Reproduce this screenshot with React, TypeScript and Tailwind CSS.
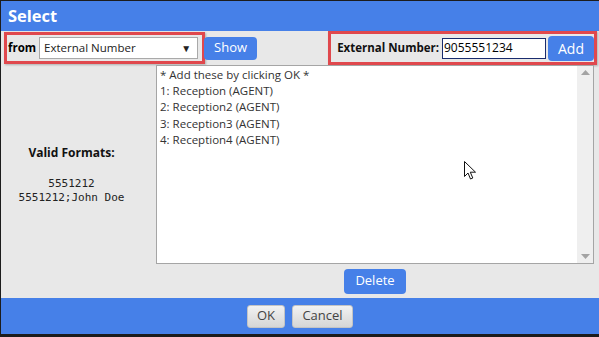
import React from "react";

const blue = "bg-[#4680e8]";

export default function App() {
  const items = [
    "* Add these by clicking OK *",
    "1: Reception (AGENT)",
    "2: Reception2 (AGENT)",
    "3: Reception3 (AGENT)",
    "4: Reception4 (AGENT)",
  ];

  return (
    <div
      className="w-[599px] h-[337px] bg-[#1c1c1c] pl-px pt-px pb-[3px] overflow-hidden"
      style={{ fontFamily: '"Open Sans", "Noto Sans", sans-serif' }}
    >
      <div className="h-full flex flex-col bg-[#e8e8e8]">
        {/* Title */}
        <div className={`h-[30px] ${blue} flex items-center px-[7px]`}>
          <span className="text-white font-bold text-[16.5px] leading-none">Select</span>
        </div>

        {/* Toolbar */}
        <div className="h-[34px] flex items-center justify-between pr-[2px]">
          <div className="flex items-center">
            <div className="ml-[3px] h-[32px] border-[3px] border-[#e0484d] flex items-center pl-[1px] pr-[4px] gap-[3px] shadow-[1px_1px_2px_rgba(0,0,0,0.25)]">
              <span className="text-[11.5px] font-bold text-black">from</span>
              <div className="w-[159px] h-[22px] bg-white border border-[#a9a9a9] flex items-center justify-between px-[4px] text-[11.5px] text-[#222]">
                <span>External Number</span>
                <span className="text-[10px] mr-[2px]">▼</span>
              </div>
            </div>
            <button className={`${blue} text-white text-[13px] rounded-[4px] w-[53px] h-[23px] -ml-[1px]`}>
              Show
            </button>
          </div>

          <div className="h-[34px] border-[3px] border-[#e0484d] flex items-center pl-[6px] shadow-[1px_1px_2px_rgba(0,0,0,0.25)]">
            <span className="text-[11.5px] font-bold text-[#111] mr-[3px]">External Number:</span>
            <div className="w-[104px] h-[21px] bg-white border border-[#1a2c6e] flex items-center px-[1px] text-[12px] text-black">
              9055551234
            </div>
            <button className={`${blue} text-white text-[14px] rounded-[4px] w-[46px] h-[25px] ml-[2px]`}>
              Add
            </button>
          </div>
        </div>

        {/* Body */}
        <div className="flex h-[199px] pr-[5px]">
          <div className="w-[155px] pr-[14px] flex flex-col items-center pt-[79px]">
            <span className="text-[12px] font-bold text-[#111]">Valid Formats:</span>
            <div
              className="mt-[15px] text-[11px] leading-[14px] text-[#222] text-center"
              style={{ fontFamily: '"DejaVu Sans Mono", monospace' }}
            >
              <div>5551212</div>
              <div>5551212;John Doe</div>
            </div>
          </div>
          <div className="flex-1 relative bg-white border border-[#a5a5a5] flex">
            <div className="flex-1 pl-[3px] pt-[1px] text-[11.5px] leading-[16.2px] text-[#333]">
              {items.map((t) => (
                <div key={t}>{t}</div>
              ))}
            </div>
            <div className="w-[16px] bg-[#efefef] flex flex-col items-center justify-between py-[4px]">
              <svg width="9" height="5" viewBox="0 0 9 5">
                <path d="M0 5 L4.5 0 L9 5 Z" fill="#a3a3a3" />
              </svg>
              <svg width="9" height="5" viewBox="0 0 9 5">
                <path d="M0 0 L4.5 5 L9 0 Z" fill="#a3a3a3" />
              </svg>
            </div>
            {/* mouse cursor */}
            <svg
              className="absolute left-[307px] top-[95px]"
              width="13"
              height="20"
              viewBox="0 0 13 20"
            >
              <path
                d="M0.5 0.5 L0.5 15.5 L4 12 L6.5 18 L8.8 17 L6.3 11.2 L11.5 11.2 Z"
                fill="white"
                stroke="#111"
                strokeWidth="1"
                strokeLinejoin="round"
              />
            </svg>
          </div>
        </div>

        {/* Delete row */}
        <div className="h-[34px] flex pr-[5px]">
          <div className="w-[155px]" />
          <div className="flex-1 flex items-center justify-center">
            <button className={`${blue} text-white text-[13px] rounded-[4px] w-[62px] h-[25px]`}>
              Delete
            </button>
          </div>
        </div>

        {/* Footer */}
        <div className={`flex-1 ${blue} flex items-center justify-center gap-[7px]`}>
          <button className="w-[38px] h-[23px] rounded-[3px] bg-gradient-to-b from-[#f2f2f2] to-[#d6d6d6] border border-[#c4c4c4] text-[13px] text-[#444]">
            OK
          </button>
          <button className="w-[61px] h-[23px] rounded-[3px] bg-gradient-to-b from-[#f2f2f2] to-[#d6d6d6] border border-[#c4c4c4] text-[13px] text-[#444]">
            Cancel
          </button>
        </div>
      </div>
    </div>
  );
}
